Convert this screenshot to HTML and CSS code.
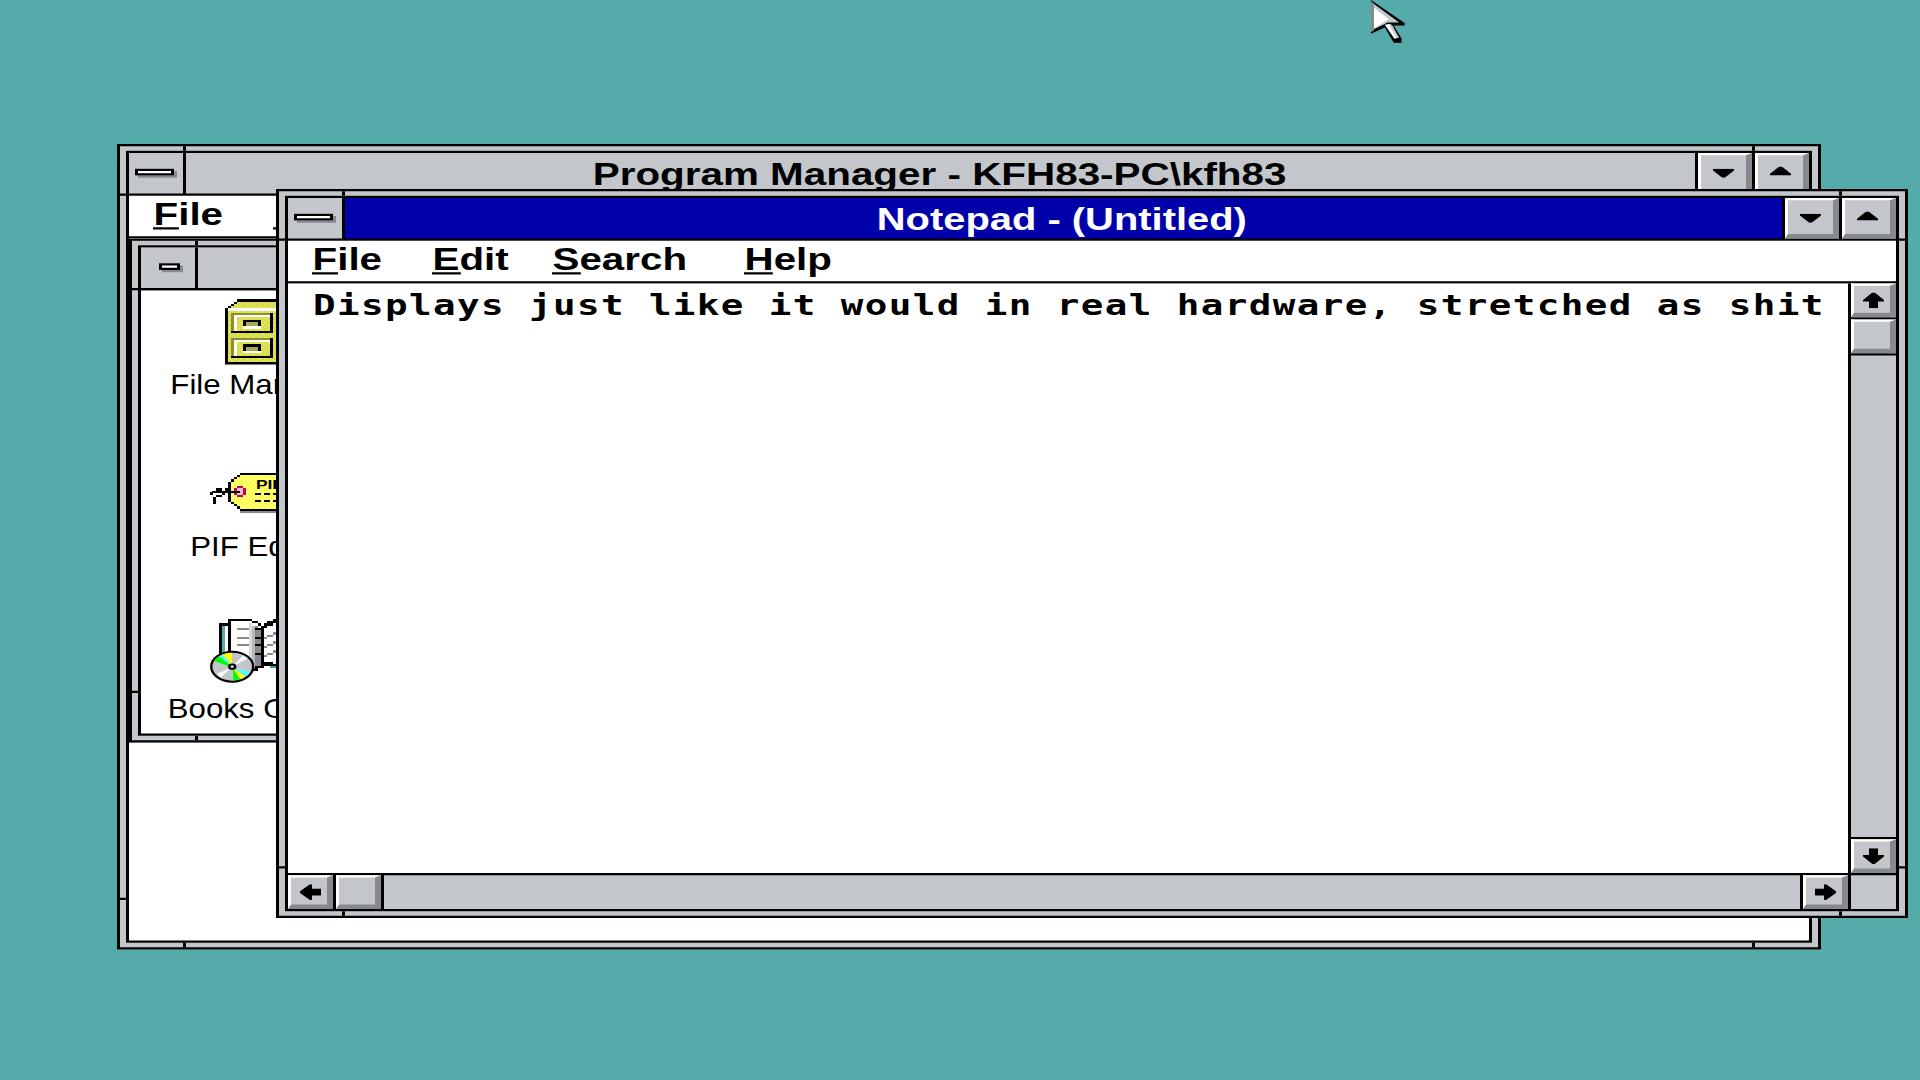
FILE: index.html
```html
<!DOCTYPE html>
<html lang="en">
<head>
<meta charset="utf-8">
<title>Program Manager</title>
<link rel="stylesheet" href="styles.css">
</head>
<body>
<svg class="defs" width="0" height="0" aria-hidden="true">
  <defs>
    <symbol id="tri-down" viewBox="0 0 7 4"><path d="M0 0h7v.8L3.9 4h-.8L0 .8z"/></symbol>
    <symbol id="tri-up" viewBox="0 0 7 4"><path d="M3.1 0h.8L7 3.2V4H0v-.8z"/></symbol>
    <symbol id="arrow" viewBox="0 0 7 7"><path d="M3.1 0h.8L7 3.3V4h-2v3h-3v-3h-2v-.7z"/></symbol>
    <pattern id="dither" width="2" height="2" patternUnits="userSpaceOnUse">
      <rect width="2" height="2" fill="#e9e92c"/><rect width="1" height="1" fill="#d3d37a"/><rect x="1" y="1" width="1" height="1" fill="#d3d37a"/>
    </pattern>
    <pattern id="dither-light" width="2" height="2" patternUnits="userSpaceOnUse">
      <rect width="2" height="2" fill="#ffff2a"/><rect width="1" height="1" fill="#ffff9c"/><rect x="1" y="1" width="1" height="1" fill="#ffff9c"/>
    </pattern>
  </defs>
</svg>
<div class="desktop">
  <section class="window program">
    <div class="inner">
      <header class="titlebar">
        <button class="control"><i class="bar"></i></button>
        <h1 class="title"><span class="t-program">Program Manager - KFH83-PC\kfh83</span></h1>
        <button class="bevel min"><svg><use href="#tri-down"/></svg></button>
        <button class="bevel max"><svg><use href="#tri-up"/></svg></button>
      </header>
      <nav class="menu">
        <a><span><u>F</u>ile</span></a><a><span><u class="round">O</u>ptions</span></a>
      </nav>
      <div class="workspace">
        <section class="window child">
          <div class="inner">
            <header class="titlebar">
              <button class="control"><i class="bar short"></i></button>
              <h2 class="title"></h2>
              <button class="bevel min"><svg><use href="#tri-down"/></svg></button>
              <button class="bevel max"><svg><use href="#tri-up"/></svg></button>
            </header>
            <div class="icons">
              <figure>
                <svg viewBox="0 0 32 32" shape-rendering="crispEdges">
                  <path fill="#000" d="M9 3h22v29h-26v-25h1v-1h1v-1h1v-1h1z"/>
                  <path fill="url(#dither)" d="M9 4h21v27h-24v-24h1v-1h1v-1h1z"/>
                  <path fill="#fff" d="M6 7h20v1h-20z"/>
                  <g id="drawer">
                    <path fill="#000" d="M7 18h14v-9h-1v8h-13z"/>
                    <path fill="#8e8e35" d="M7 9h13v1h-12v7h-1z"/>
                    <path fill="#fff" d="M8 10h12v1h-11v6h-1z"/>
                    <path fill="#000" d="M11 12h6v3h-6z"/>
                    <path fill="#a9a955" d="M12 13h4v2h-4z"/>
                    <path fill="#fff" d="M11 15h6v1h-6z"/>
                  </g>
                  <use href="#drawer" y="11"/>
                </svg>
                <figcaption><span>File Manager</span></figcaption>
              </figure>
              <figure>
                <svg viewBox="0 0 32 32" shape-rendering="crispEdges">
                  <path fill="#868a8e" d="M10 25h22v1h-22z"/>
                  <path fill="#000" d="M10 8h22v17h-22v-1h-1v-1h-1v-1h-1v-1h-1v-9h1v-1h1v-1h1v-1h1z"/>
                  <path fill="url(#dither-light)" d="M10 9h22v15h-22v-1h-1v-1h-1v-1h-1v-9h1v-1h1v-1h1z"/>
                  <path fill="#c4005c" d="M9 14h2v1h1v3h-1v1h-2v-1h-1v-3h1z"/>
                  <path fill="#e2c3c7" d="M9 15h2v3h-2z"/>
                  <path fill="#000" d="M1 16h1v-1h2v1h6v1h-5v1h-1v1h-2v3h-1v-3h1v-1h2v-1h-3v1h-2v-1h1zM5 15h1v-1h1v2h-2z"/>
                  <text x="15.3" y="15.2" class="tag">PIF</text>
                  <path fill="#000" d="M15 17h2v1h-2zM18 17h2v1h-2zM21 17h2v1h-2zM15 20h2v1h-2zM18 20h2v1h-2zM21 20h2v1h-2z"/>
                </svg>
                <figcaption><span>PIF Editor</span></figcaption>
              </figure>
              <figure>
                <svg viewBox="0 0 32 32">
                  <g shape-rendering="crispEdges">
                  <path fill="#000" d="M3 3h4v22h-4z"/><path fill="#55aaaa" d="M4 4h1v20h-1z"/><path fill="#fff" d="M5 4h1v20h-1z"/>
                  <path fill="#000" d="M6 1h8v1h2v1h1v1h1v-1h1v-1h2v-1h2v-1h5v24h-6v-1h-2v-1h-2v1h-2v1h-3v-1h-6z"/>
                  <path fill="#fff" d="M7 2h7v1h2v1h1v18h-2v1h-8zM18 5h1v-1h2v-1h2v-1h4v19h-6v-1h-3z"/>
                  <path fill="#868a8e" d="M9 5h4v1h-4zM9 9h4v1h-4zM9 12h4v1h-4zM18 9h1v-1h2v-1h2v-1h1v1h-1v1h-2v1h-2v1h-1zM18 13h1v-1h2v-1h2v-1h1v1h-1v1h-2v1h-2v1h-1zM18 17h1v-1h2v-1h2v-1h1v1h-1v1h-2v1h-2v1h-1z"/>
                  <path fill="#d8dadc" d="M13 3h1v19h-1z"/><path fill="#b4b8bc" d="M14 4h1v18h-1z"/><path fill="#868a8e" d="M15 4h1v18h-1z"/><path fill="#868a8e" d="M16 5h1v17h-1z"/>
                  <path fill="#000" d="M15 5h2v1h-2zM15 9h2v1h-2zM15 12h2v1h-2zM15 16h2v1h-2z"/>
                  <path fill="#2aa0a0" d="M20 22h3v1h-3z"/>
                  </g>
                  <ellipse cx="7.4" cy="22.3" rx="7.4" ry="7.1" fill="#000"/>
                  <ellipse cx="7.4" cy="22.3" rx="6.6" ry="6.2" fill="#c3c7cb"/>
                  <path fill="#fff" d="M7.4 22.3L11 17.4l1.6 1.2zM7.4 22.3L2.4 25.6l1.2 1.5z"/>
                  <path fill="#ffff00" d="M6.8 21.5L4.1 16.9Q5.6 16.1 7.3 16.1V21z"/>
                  <path fill="#55ffff" d="M6.8 22L3 17.9L4.1 16.9L7 21z"/>
                  <path fill="#00ff00" d="M6.8 22.3L1.4 19.8Q2 18.5 3 17.7L6.9 21.8z"/>
                  <path fill="#00ff00" d="M7.6 22.8L7.8 28.5Q9 28.4 10.1 27.8z"/>
                  <path fill="#ffff00" d="M7.6 22.8L10.1 27.8Q11 27.5 11.8 26.7z"/>
                  <path fill="#55ffff" d="M7.6 22.5L11.8 26.7Q12.8 26 13.3 24.7z"/>
                  <ellipse cx="7.4" cy="22.3" rx="1.4" ry="1.4" fill="#000"/>
                  <ellipse cx="7.4" cy="22.3" rx=".6" ry=".6" fill="#c3c7cb"/>
                </svg>
                <figcaption><span>Books Online</span></figcaption>
              </figure>
            </div>
          </div>
        </section>
      </div>
    </div>
  </section>

  <section class="window notepad">
    <div class="inner">
      <header class="titlebar active">
        <button class="control"><i class="bar"></i></button>
        <h1 class="title"><span class="t-notepad">Notepad - (Untitled)</span></h1>
        <button class="bevel min"><svg><use href="#tri-down"/></svg></button>
        <button class="bevel max"><svg><use href="#tri-up"/></svg></button>
      </header>
      <nav class="menu">
        <a><span><u>F</u>ile</span></a><a><span><u>E</u>dit</span></a><a class="wide"><span><u>S</u>earch</span></a><a><span><u>H</u>elp</span></a>
      </nav>
      <div class="editor">
        <pre class="text">Displays just like it would in real hardware, stretched as shit</pre>
        <div class="scroll vertical">
          <button class="bevel"><svg class="arrow"><use href="#arrow"/></svg></button>
          <b class="bevel"></b>
          <i class="track"></i>
          <button class="bevel"><svg class="arrow down"><use href="#arrow"/></svg></button>
        </div>
        <div class="scroll horizontal">
          <button class="bevel"><svg class="arrow left"><use href="#arrow"/></svg></button>
          <b class="bevel"></b>
          <i class="track"></i>
          <button class="bevel"><svg class="arrow right"><use href="#arrow"/></svg></button>
        </div>
        <div class="corner"></div>
      </div>
    </div>
  </section>

  <svg class="pointer" viewBox="0 0 12 20">
    <path fill="#000" d="M0 0L11.2 10.2V11.3H7.6L10.2 17.2V19H7.6L4.6 12.2L0 15z"/>
    <path fill="#868a8e" d="M0 .6L1 1.5V13.5L0 14.2z"/>
    <path fill="#c3c7cb" d="M1 1.8L9.4 10H5.6L1 13z"/>
    <path fill="#fff" d="M1 3.4L6 8.6L1 12.6z"/>
    <path fill="#fff" d="M4.6 11L6.4 10.6L9 16.8L7.8 17.2z"/>
    <path fill="#c3c7cb" d="M6 11L7 11L9.4 16.8L8.6 17z"/>
  </svg>
</div>
</body>
</html>
```
FILE: styles.css
```css
/* The desktop is laid out at 640x480 and stretched to the 16:9 screen. */
* { box-sizing: border-box; }
body { margin: 0; width: 1920px; height: 1080px; overflow: hidden; background: #55aaaa; }
.defs { position: absolute; }
.desktop {
  position: relative;
  width: 640px;
  height: 480px;
  overflow: hidden;
  background: #55aaaa;
  color: #000;
  transform: scale(3, 2.25);
  transform-origin: 0 0;
  font-family: "Liberation Sans", Arial, sans-serif;
}
button { margin: 0; padding: 0; border: 0; border-radius: 0; color: #000; }
h1, h2, figure, pre { margin: 0; }
svg { display: block; fill: currentColor; }

.window {
  position: absolute;
  padding: 2px;
  border: 1px solid #000;
  background:
    linear-gradient(#000, #000) 21px 0 / 1px 100% no-repeat,
    linear-gradient(#000, #000) right 21px top 0 / 1px 100% no-repeat,
    linear-gradient(#000, #000) 0 21px / 100% 1px no-repeat,
    linear-gradient(#000, #000) left 0 bottom 21px / 100% 1px no-repeat,
    #c3c7cb;
}
.program { left: 39px; top: 64px; width: 568px; height: 358px; }
.notepad { left: 92px; top: 84px; width: 544px; height: 324px; }
.child { left: 0; top: 0; width: 440px; height: 224px; }
.inner { display: flex; flex-direction: column; height: 100%; border: 1px solid #000; background: #fff; }
.child > .inner { border-left-width: 1px; }
.workspace { border-top: 0; }

.titlebar {
  flex: none;
  display: grid;
  grid-template-columns: 18px 1fr 18px 18px;
  gap: 1px;
  height: 19px;
  border-bottom: 1px solid #000;
  background: #000;
}
.control { display: flex; align-items: flex-start; justify-content: flex-start; padding: 7px 3px 0 2px; background: #c3c7cb; }
.bar { width: 13px; height: 3px; border: 1px solid #000; background: #fff; box-shadow: 1px 1px 0 #868a8e; }
.bar.short { width: 7px; margin-left: 4px; }
.title {
  height: 18px;
  background: #c3c7cb;
  font-size: 14px;
  font-weight: bold;
  line-height: 18px;
  text-align: center;
  white-space: nowrap;
  overflow: hidden;
}
.title span { display: inline-block; }
.active .title { background: #0000aa; color: #fff; }
.t-program { transform: scaleX(.962); }
.t-notepad { margin-right: 2px; transform: scaleX(.95); }

.bevel {
  display: block;
  border: solid;
  border-width: 1px 2px 2px 1px;
  border-color: #fff #868a8e #868a8e #fff;
  background: #c3c7cb;
}
.min svg, .max svg { width: 7px; height: 4px; margin-left: 4px; }
.min, .max { display: flex; align-items: flex-start; }
.min svg { margin-top: 6px; }
.max svg { margin-top: 5px; }

.menu { flex: none; display: flex; height: 19px; padding-left: 8px; border-bottom: 1px solid #000; background: #fff; }
.menu a { width: 40px; padding-top: 1px; font-size: 14px; font-weight: bold; line-height: 15px; white-space: nowrap; }
.menu a.wide { width: 64px; }
.menu span { display: inline-block; transform: scaleX(.96); transform-origin: 0 0; }
.menu u { display: inline-block; height: 14px; padding-left: .2px; border-bottom: 1px solid #000; text-decoration: none; }
.menu u.round { padding-left: 1.2px; }

.workspace { position: relative; flex: 1; overflow: hidden; }
.icons { display: flex; flex-direction: column; width: 80px; padding-top: 1px; }
.icons figure { display: flex; flex-direction: column; align-items: center; height: 72px; }
.icons figure > svg { width: 32px; height: 32px; margin-right: 2px; }
.icons figcaption { margin: 2px .5px 0 0; font-size: 12.4px; line-height: 14px; white-space: nowrap; }
.icons figcaption span { display: inline-block; transform: scaleX(.84); }
.tag { font: bold 5.8px "Liberation Sans", sans-serif; }

.editor { flex: 1; display: grid; grid-template: 1fr 15px / 1fr 15px; gap: 1px; min-height: 0; background: #000; }
.text {
  padding: 2px 0 0 8.3px;
  background: #fff;
  font: bold 12.5px/15px "DejaVu Sans Mono", "Liberation Mono", monospace;
  letter-spacing: .474px;
  white-space: pre;
  overflow: hidden;
}
.scroll { display: flex; gap: 1px; }
.scroll .bevel { flex: none; width: 15px; height: 15px; }
.vertical { flex-direction: column; }
.track { flex: 1; background: #c3c7cb; }
.corner { background: #c3c7cb; }
.arrow { width: 7px; height: 7px; margin: 1px 0 0 3px; }
.arrow.down { transform: rotate(180deg); }
.arrow.left { transform: rotate(-90deg); }
.arrow.right { transform: rotate(90deg); }

.pointer { position: absolute; left: 457px; top: 0; width: 12px; height: 20px; }
```
